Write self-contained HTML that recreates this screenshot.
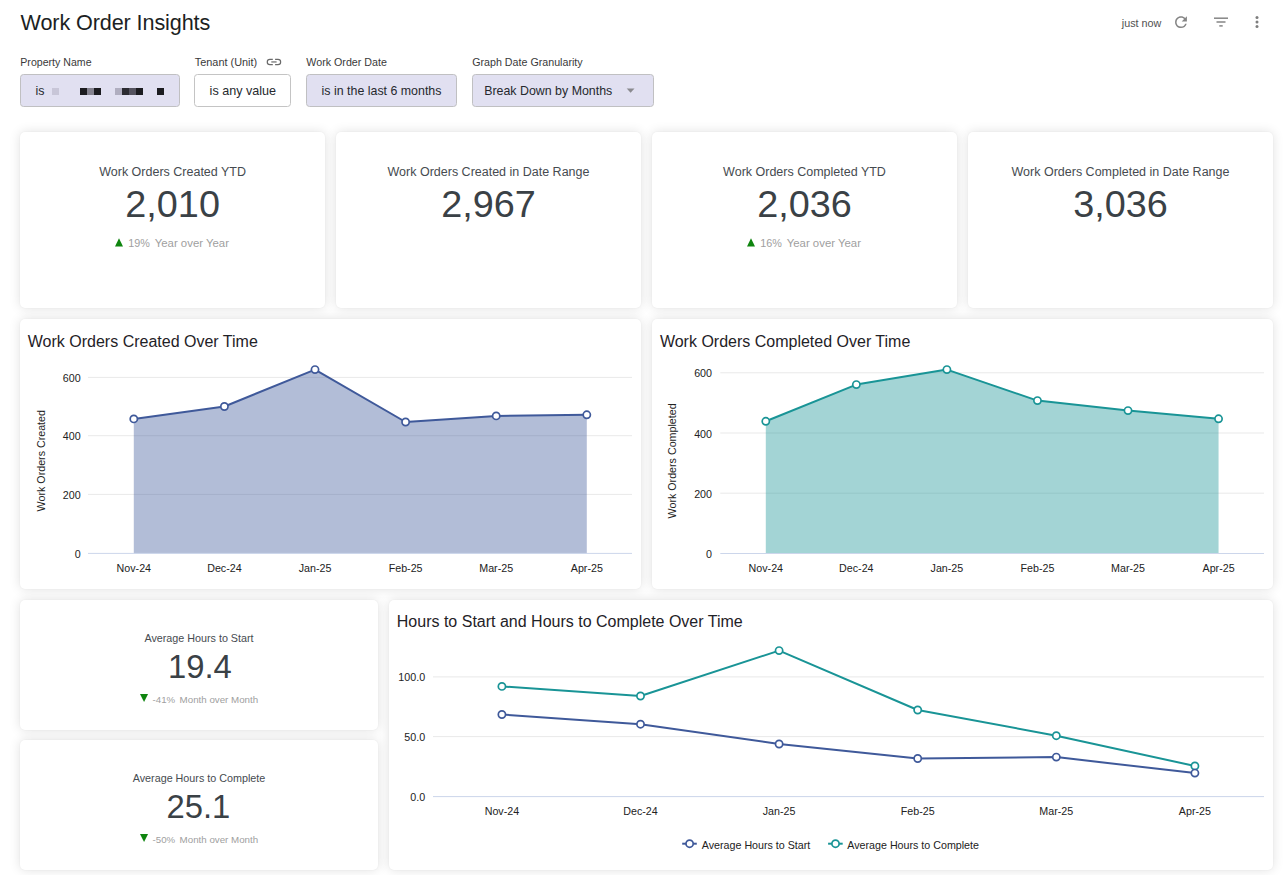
<!DOCTYPE html>
<html><head><meta charset="utf-8"><title>Work Order Insights</title>
<style>
html,body{margin:0;padding:0;background:#ffffff;}
body{width:1284px;height:875px;overflow:hidden;position:relative;font-family:'Liberation Sans', sans-serif;}
.t{position:absolute;white-space:nowrap;line-height:1;}
.fbox{position:absolute;top:74.4px;height:32.4px;border:1px solid;border-radius:3.5px;box-sizing:border-box;}
.card{position:absolute;background:#fff;border-radius:5px;box-shadow:0 0 2px rgba(0,0,0,0.06),0 0 12px rgba(0,0,0,0.12);}
.ov{pointer-events:none;}
</style></head>
<body>
<div class="t" style="left:20.50px;top:11.54px;font-size:21.6px;color:#1c1f23;letter-spacing:-0.1px;">Work Order Insights</div>
<div class="t" style="left:1121.80px;top:17.72px;font-size:10.8px;color:#505050;">just now</div>

<svg class="ov" width="1284" height="60" style="position:absolute;left:0;top:0">
  <path transform="translate(1172.1,13.3) scale(0.74)" fill="#858585" d="M17.65 6.35C16.2 4.9 14.21 4 12 4c-4.42 0-7.99 3.58-7.99 8s3.57 8 7.99 8c3.73 0 6.84-2.55 7.73-6h-2.08c-.82 2.330-3.04 4-5.650 4-3.31 0-6-2.69-6-6s2.69-6 6-6c1.66 0 3.14.69 4.22 1.78L13 11h7V4l-2.35 2.35z"/>
  <g stroke="#858585" stroke-width="1.5">
    <line x1="1214" y1="18.2" x2="1228" y2="18.2"/>
    <line x1="1216.5" y1="22" x2="1225.5" y2="22"/>
    <line x1="1219.3" y1="25.9" x2="1222.7" y2="25.9"/>
  </g>
  <g fill="#7e7e7e">
    <circle cx="1257" cy="17.4" r="1.5"/>
    <circle cx="1257" cy="22" r="1.5"/>
    <circle cx="1257" cy="26.5" r="1.5"/>
  </g>
</svg>
<div class="t" style="left:20.30px;top:57.09px;font-size:10.6px;color:#3a3a3a;">Property Name</div>
<div class="t" style="left:194.80px;top:56.83px;font-size:10.9px;color:#3a3a3a;">Tenant (Unit)</div>
<div class="t" style="left:306.30px;top:57.00px;font-size:10.7px;color:#3a3a3a;">Work Order Date</div>
<div class="t" style="left:472.20px;top:57.00px;font-size:10.7px;color:#3a3a3a;">Graph Date Granularity</div>
<svg width="1284" height="80" class="ov" style="position:absolute;left:0;top:0">
<g fill="none" stroke="#6a6a6a" stroke-width="1.2">
<path d="M272.8 59.3 H269.9 A2.65 2.65 0 0 0 269.9 64.6 H272.8"/>
<path d="M275.1 59.3 H278 A2.65 2.65 0 0 1 278 64.6 H275.1"/>
<line x1="271.3" y1="61.95" x2="276.6" y2="61.95"/>
</g></svg><div class="fbox" style="left:20.2px;width:159.60000000000002px;background:#e1e0f1;border-color:#c0c0c2"></div>
<div class="fbox" style="left:194.0px;width:96.80000000000001px;background:#ffffff;border-color:#c4c4c4"></div>
<div class="fbox" style="left:306.1px;width:150.89999999999998px;background:#e1e0f1;border-color:#c0c0c2"></div>
<div class="fbox" style="left:471.9px;width:182.0px;background:#e1e0f1;border-color:#c0c0c2"></div>
<div class="t" style="left:35.50px;top:85.06px;font-size:12.4px;color:#26292e;">is</div>
<div class="t" style="left:209.60px;top:84.89px;font-size:12.6px;color:#26292e;">is any value</div>
<div class="t" style="left:321.60px;top:85.06px;font-size:12.4px;color:#26292e;">is in the last 6 months</div>
<div class="t" style="left:484.20px;top:85.06px;font-size:12.4px;color:#26292e;">Break Down by Months</div>
<div style="position:absolute;left:52.2px;top:88.2px;width:7px;height:6.8px;background:#c8c6d8"></div>
<div style="position:absolute;left:80.0px;top:88.2px;width:7px;height:6.8px;background:#1c1c20"></div>
<div style="position:absolute;left:87.0px;top:88.2px;width:7px;height:6.8px;background:#85838f"></div>
<div style="position:absolute;left:94.0px;top:88.2px;width:7px;height:6.8px;background:#1c1c20"></div>
<div style="position:absolute;left:115.0px;top:88.2px;width:7px;height:6.8px;background:#b0aec0"></div>
<div style="position:absolute;left:122.0px;top:88.2px;width:7px;height:6.8px;background:#2c2c32"></div>
<div style="position:absolute;left:129.0px;top:88.2px;width:7px;height:6.8px;background:#55535f"></div>
<div style="position:absolute;left:136.0px;top:88.2px;width:7px;height:6.8px;background:#1c1c20"></div>
<div style="position:absolute;left:157.0px;top:88.2px;width:7px;height:6.8px;background:#1c1c20"></div>
<svg width="10" height="6" style="position:absolute;left:626px;top:88px"><path d="M0.7 0.6 L8.5 0.6 L4.6 4.8 Z" fill="#8a8a8f"/></svg>

<div class="card" style="left:20px;top:132px;width:305px;height:176px"></div>
<div class="card" style="left:336px;top:132px;width:305px;height:176px"></div>
<div class="card" style="left:652px;top:132px;width:305px;height:176px"></div>
<div class="card" style="left:968px;top:132px;width:305px;height:176px"></div>
<div class="card" style="left:20px;top:319px;width:621px;height:270px"></div>
<div class="card" style="left:652px;top:319px;width:621px;height:270px"></div>
<div class="card" style="left:20px;top:600px;width:358px;height:130px"></div>
<div class="card" style="left:20px;top:740px;width:358px;height:130px"></div>
<div class="card" style="left:389px;top:600px;width:884px;height:270px"></div>

<div class="t" style="left:-127.40px;width:600px;text-align:center;top:165.78px;font-size:12.5px;color:#464b50;">Work Orders Created YTD</div>
<div class="t" style="left:-127.40px;width:600px;text-align:center;top:186.27px;font-size:37.8px;color:#3a4146;">2,010</div>
<div class="t" style="left:188.50px;width:600px;text-align:center;top:165.78px;font-size:12.5px;color:#464b50;">Work Orders Created in Date Range</div>
<div class="t" style="left:188.50px;width:600px;text-align:center;top:186.27px;font-size:37.8px;color:#3a4146;">2,967</div>
<div class="t" style="left:504.50px;width:600px;text-align:center;top:165.78px;font-size:12.5px;color:#464b50;">Work Orders Completed YTD</div>
<div class="t" style="left:504.50px;width:600px;text-align:center;top:186.27px;font-size:37.8px;color:#3a4146;">2,036</div>
<div class="t" style="left:820.50px;width:600px;text-align:center;top:165.78px;font-size:12.5px;color:#464b50;">Work Orders Completed in Date Range</div>
<div class="t" style="left:820.50px;width:600px;text-align:center;top:186.27px;font-size:37.8px;color:#3a4146;">3,036</div>
<svg width="10" height="10" style="position:absolute;left:115.1px;top:238.0px"><path d="M4 0.3 L8 8.5 L0 8.5 Z" fill="#0f850f"/></svg>
<div class="t" style="left:128.30px;top:237.52px;font-size:10.8px;color:#a0a0a0;">19%</div>
<div class="t" style="left:154.70px;top:237.61px;font-size:11.4px;color:#a0a0a0;">Year over Year</div>
<svg width="10" height="10" style="position:absolute;left:747.1px;top:238.0px"><path d="M4 0.3 L8 8.5 L0 8.5 Z" fill="#0f850f"/></svg>
<div class="t" style="left:760.30px;top:237.52px;font-size:10.8px;color:#a0a0a0;">16%</div>
<div class="t" style="left:786.70px;top:237.61px;font-size:11.4px;color:#a0a0a0;">Year over Year</div>
<div class="t" style="left:-101.00px;width:600px;text-align:center;top:632.66px;font-size:10.75px;color:#464b50;">Average Hours to Start</div>
<div class="t" style="left:-100.10px;width:600px;text-align:center;top:650.72px;font-size:32.8px;color:#3a4146;">19.4</div>
<svg width="10" height="10" style="position:absolute;left:139.9px;top:694.2px"><path d="M0 0 L8.1 0 L4.05 8.1 Z" fill="#0f850f"/></svg>
<div class="t" style="left:152.60px;top:694.65px;font-size:9.7px;color:#a0a0a0;">-41%</div>
<div class="t" style="left:179.60px;top:694.61px;font-size:9.75px;color:#a0a0a0;">Month over Month</div>
<div class="t" style="left:-101.00px;width:600px;text-align:center;top:772.66px;font-size:10.75px;color:#464b50;">Average Hours to Complete</div>
<div class="t" style="left:-101.60px;width:600px;text-align:center;top:790.72px;font-size:32.8px;color:#3a4146;">25.1</div>
<svg width="10" height="10" style="position:absolute;left:139.9px;top:834.2px"><path d="M0 0 L8.1 0 L4.05 8.1 Z" fill="#0f850f"/></svg>
<div class="t" style="left:152.60px;top:834.65px;font-size:9.7px;color:#a0a0a0;">-50%</div>
<div class="t" style="left:179.60px;top:834.61px;font-size:9.75px;color:#a0a0a0;">Month over Month</div>
<div class="t" style="left:27.80px;top:333.60px;font-size:16px;color:#1f2227;">Work Orders Created Over Time</div>
<div class="t" style="left:659.90px;top:333.60px;font-size:16px;color:#1f2227;">Work Orders Completed Over Time</div>
<div class="t" style="left:396.80px;top:613.60px;font-size:16px;color:#1f2227;">Hours to Start and Hours to Complete Over Time</div>

<svg class="ov" width="1284" height="875" style="position:absolute;left:0;top:0" font-family="Liberation Sans, sans-serif"><line x1="88" y1="377.4" x2="632" y2="377.4" stroke="#e9e9e9" stroke-width="1"/>
<line x1="88" y1="435.7" x2="632" y2="435.7" stroke="#e9e9e9" stroke-width="1"/>
<line x1="88" y1="494.4" x2="632" y2="494.4" stroke="#e9e9e9" stroke-width="1"/>
<text x="80.7" y="381.9" text-anchor="end" font-size="10.7" fill="#222222">600</text>
<text x="80.7" y="440.2" text-anchor="end" font-size="10.7" fill="#222222">400</text>
<text x="80.7" y="498.9" text-anchor="end" font-size="10.7" fill="#222222">200</text>
<text x="80.7" y="557.9" text-anchor="end" font-size="10.7" fill="#222222">0</text>
<polygon points="133.80,553.4 133.80,418.90 224.40,406.50 315.00,369.60 405.60,422.00 496.20,415.90 586.80,414.80 586.80,553.4" fill="#3f599a" fill-opacity="0.4"/>
<line x1="88" y1="553.4" x2="632" y2="553.4" stroke="#ccd6eb" stroke-width="1"/>
<polyline points="133.80,418.90 224.40,406.50 315.00,369.60 405.60,422.00 496.20,415.90 586.80,414.80" fill="none" stroke="#3f599a" stroke-width="2" stroke-linejoin="round"/>
<circle cx="133.80" cy="418.90" r="3.6" fill="#fff" stroke="#3f599a" stroke-width="1.7"/>
<circle cx="224.40" cy="406.50" r="3.6" fill="#fff" stroke="#3f599a" stroke-width="1.7"/>
<circle cx="315.00" cy="369.60" r="3.6" fill="#fff" stroke="#3f599a" stroke-width="1.7"/>
<circle cx="405.60" cy="422.00" r="3.6" fill="#fff" stroke="#3f599a" stroke-width="1.7"/>
<circle cx="496.20" cy="415.90" r="3.6" fill="#fff" stroke="#3f599a" stroke-width="1.7"/>
<circle cx="586.80" cy="414.80" r="3.6" fill="#fff" stroke="#3f599a" stroke-width="1.7"/>
<text x="133.80" y="572" text-anchor="middle" font-size="10.7" fill="#222222">Nov-24</text>
<text x="224.40" y="572" text-anchor="middle" font-size="10.7" fill="#222222">Dec-24</text>
<text x="315.00" y="572" text-anchor="middle" font-size="10.7" fill="#222222">Jan-25</text>
<text x="405.60" y="572" text-anchor="middle" font-size="10.7" fill="#222222">Feb-25</text>
<text x="496.20" y="572" text-anchor="middle" font-size="10.7" fill="#222222">Mar-25</text>
<text x="586.80" y="572" text-anchor="middle" font-size="10.7" fill="#222222">Apr-25</text>
<text transform="translate(45,460.7) rotate(-90)" text-anchor="middle" font-size="10.7" fill="#222222">Work Orders Created</text><line x1="720.3" y1="372.8" x2="1264" y2="372.8" stroke="#e9e9e9" stroke-width="1"/>
<line x1="720.3" y1="433.0" x2="1264" y2="433.0" stroke="#e9e9e9" stroke-width="1"/>
<line x1="720.3" y1="493.2" x2="1264" y2="493.2" stroke="#e9e9e9" stroke-width="1"/>
<text x="712" y="377.3" text-anchor="end" font-size="10.7" fill="#222222">600</text>
<text x="712" y="437.5" text-anchor="end" font-size="10.7" fill="#222222">400</text>
<text x="712" y="497.7" text-anchor="end" font-size="10.7" fill="#222222">200</text>
<text x="712" y="558.0" text-anchor="end" font-size="10.7" fill="#222222">0</text>
<polygon points="765.80,553.5 765.80,421.30 856.35,384.60 946.90,369.60 1037.45,400.60 1128.00,410.60 1218.55,418.80 1218.55,553.5" fill="#199496" fill-opacity="0.4"/>
<line x1="720.3" y1="553.5" x2="1264" y2="553.5" stroke="#ccd6eb" stroke-width="1"/>
<polyline points="765.80,421.30 856.35,384.60 946.90,369.60 1037.45,400.60 1128.00,410.60 1218.55,418.80" fill="none" stroke="#199496" stroke-width="2" stroke-linejoin="round"/>
<circle cx="765.80" cy="421.30" r="3.6" fill="#fff" stroke="#199496" stroke-width="1.7"/>
<circle cx="856.35" cy="384.60" r="3.6" fill="#fff" stroke="#199496" stroke-width="1.7"/>
<circle cx="946.90" cy="369.60" r="3.6" fill="#fff" stroke="#199496" stroke-width="1.7"/>
<circle cx="1037.45" cy="400.60" r="3.6" fill="#fff" stroke="#199496" stroke-width="1.7"/>
<circle cx="1128.00" cy="410.60" r="3.6" fill="#fff" stroke="#199496" stroke-width="1.7"/>
<circle cx="1218.55" cy="418.80" r="3.6" fill="#fff" stroke="#199496" stroke-width="1.7"/>
<text x="765.80" y="572" text-anchor="middle" font-size="10.7" fill="#222222">Nov-24</text>
<text x="856.35" y="572" text-anchor="middle" font-size="10.7" fill="#222222">Dec-24</text>
<text x="946.90" y="572" text-anchor="middle" font-size="10.7" fill="#222222">Jan-25</text>
<text x="1037.45" y="572" text-anchor="middle" font-size="10.7" fill="#222222">Feb-25</text>
<text x="1128.00" y="572" text-anchor="middle" font-size="10.7" fill="#222222">Mar-25</text>
<text x="1218.55" y="572" text-anchor="middle" font-size="10.7" fill="#222222">Apr-25</text>
<text transform="translate(676,460.9) rotate(-90)" text-anchor="middle" font-size="10.7" fill="#222222">Work Orders Completed</text><line x1="433" y1="676.9" x2="1264" y2="676.9" stroke="#e9e9e9" stroke-width="1"/>
<line x1="433" y1="736.6" x2="1264" y2="736.6" stroke="#e9e9e9" stroke-width="1"/>
<line x1="433" y1="796.6" x2="1264" y2="796.6" stroke="#ccd6eb" stroke-width="1"/>
<text x="425.1" y="681.4" text-anchor="end" font-size="10.7" fill="#222222">100.0</text>
<text x="425.1" y="741.1" text-anchor="end" font-size="10.7" fill="#222222">50.0</text>
<text x="425.1" y="801.1" text-anchor="end" font-size="10.7" fill="#222222">0.0</text>
<polyline points="501.90,686.40 640.50,696.00 779.10,650.60 917.70,710.00 1056.30,735.70 1194.90,766.00" fill="none" stroke="#199496" stroke-width="2" stroke-linejoin="round"/>
<circle cx="501.90" cy="686.40" r="3.6" fill="#fff" stroke="#199496" stroke-width="1.7"/>
<circle cx="640.50" cy="696.00" r="3.6" fill="#fff" stroke="#199496" stroke-width="1.7"/>
<circle cx="779.10" cy="650.60" r="3.6" fill="#fff" stroke="#199496" stroke-width="1.7"/>
<circle cx="917.70" cy="710.00" r="3.6" fill="#fff" stroke="#199496" stroke-width="1.7"/>
<circle cx="1056.30" cy="735.70" r="3.6" fill="#fff" stroke="#199496" stroke-width="1.7"/>
<circle cx="1194.90" cy="766.00" r="3.6" fill="#fff" stroke="#199496" stroke-width="1.7"/>
<polyline points="501.90,714.50 640.50,724.20 779.10,744.00 917.70,758.50 1056.30,757.10 1194.90,773.10" fill="none" stroke="#3f599a" stroke-width="2" stroke-linejoin="round"/>
<circle cx="501.90" cy="714.50" r="3.6" fill="#fff" stroke="#3f599a" stroke-width="1.7"/>
<circle cx="640.50" cy="724.20" r="3.6" fill="#fff" stroke="#3f599a" stroke-width="1.7"/>
<circle cx="779.10" cy="744.00" r="3.6" fill="#fff" stroke="#3f599a" stroke-width="1.7"/>
<circle cx="917.70" cy="758.50" r="3.6" fill="#fff" stroke="#3f599a" stroke-width="1.7"/>
<circle cx="1056.30" cy="757.10" r="3.6" fill="#fff" stroke="#3f599a" stroke-width="1.7"/>
<circle cx="1194.90" cy="773.10" r="3.6" fill="#fff" stroke="#3f599a" stroke-width="1.7"/>
<text x="501.90" y="815.2" text-anchor="middle" font-size="10.7" fill="#222222">Nov-24</text>
<text x="640.50" y="815.2" text-anchor="middle" font-size="10.7" fill="#222222">Dec-24</text>
<text x="779.10" y="815.2" text-anchor="middle" font-size="10.7" fill="#222222">Jan-25</text>
<text x="917.70" y="815.2" text-anchor="middle" font-size="10.7" fill="#222222">Feb-25</text>
<text x="1056.30" y="815.2" text-anchor="middle" font-size="10.7" fill="#222222">Mar-25</text>
<text x="1194.90" y="815.2" text-anchor="middle" font-size="10.7" fill="#222222">Apr-25</text>
<line x1="682.2" y1="843.7" x2="696.8000000000001" y2="843.7" stroke="#3f599a" stroke-width="2"/>
<circle cx="689.6" cy="843.7" r="3.6" fill="#fff" stroke="#3f599a" stroke-width="1.7"/>
<text x="701.8" y="848.5" font-size="10.7" fill="#222222">Average Hours to Start</text>
<line x1="828.1" y1="843.7" x2="842.7" y2="843.7" stroke="#199496" stroke-width="2"/>
<circle cx="835.5" cy="843.7" r="3.6" fill="#fff" stroke="#199496" stroke-width="1.7"/>
<text x="847.3" y="848.5" font-size="10.7" fill="#222222">Average Hours to Complete</text></svg>
</body></html>
